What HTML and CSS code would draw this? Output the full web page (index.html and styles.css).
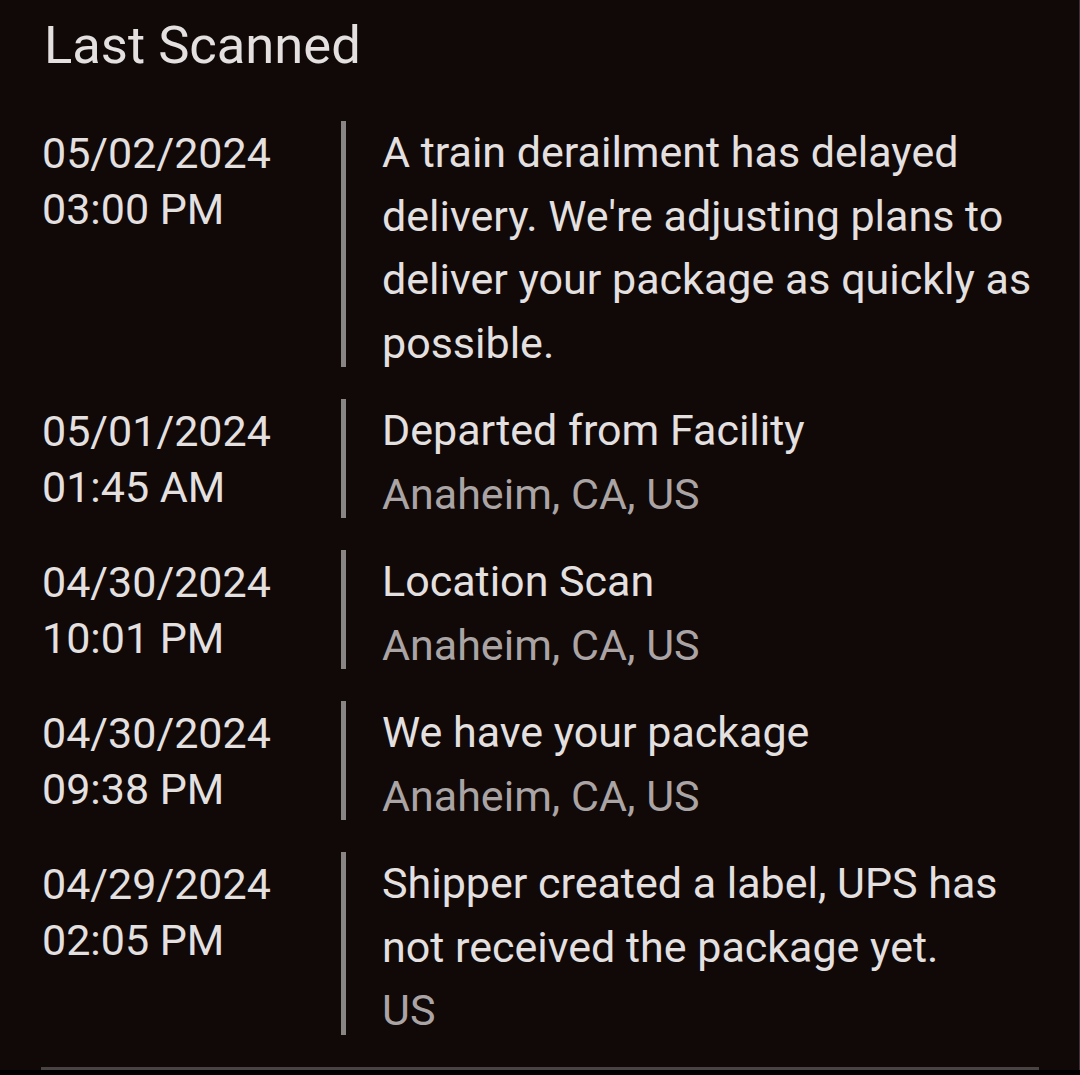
FILE: index.html
```html
<!DOCTYPE html>
<html lang="en">
<head>
<meta charset="utf-8">
<title>Last Scanned</title>
<link rel="stylesheet" href="styles.css">
</head>
<body>
<div class="card">
  <h1 class="title">Last Scanned</h1>
  <div class="list">
    <div class="row">
      <div class="when">05/02/2024<br>03:00 PM</div>
      <div class="bar"></div>
      <div class="what">
        <div class="desc">A train derailment has delayed delivery. We're adjusting plans to deliver your package as quickly as possible.</div>
      </div>
    </div>
    <div class="row">
      <div class="when">05/01/2024<br>01:45 AM</div>
      <div class="bar"></div>
      <div class="what">
        <div class="desc">Departed from Facility</div>
        <div class="loc">Anaheim, CA, US</div>
      </div>
    </div>
    <div class="row">
      <div class="when">04/30/2024<br>10:01 PM</div>
      <div class="bar"></div>
      <div class="what">
        <div class="desc">Location Scan</div>
        <div class="loc">Anaheim, CA, US</div>
      </div>
    </div>
    <div class="row">
      <div class="when">04/30/2024<br>09:38 PM</div>
      <div class="bar"></div>
      <div class="what">
        <div class="desc">We have your package</div>
        <div class="loc">Anaheim, CA, US</div>
      </div>
    </div>
    <div class="row">
      <div class="when">04/29/2024<br>02:05 PM</div>
      <div class="bar"></div>
      <div class="what">
        <div class="desc">Shipper created a label, UPS has not received the package yet.</div>
        <div class="loc">US</div>
      </div>
    </div>
  </div>
  <div class="divider"></div>
</div>
</body>
</html>
```
FILE: styles.css
```css
html, body {
  margin: 0;
  padding: 0;
  background: #000;
}
body {
  font-family: Roboto, "Noto Sans", sans-serif;
  width: 1080px;
  height: 1075px;
  overflow: hidden;
}
.card {
  background: #110808;
  height: 1070px;
  box-sizing: border-box;
  padding: 15px 40px 0 42px;
  border-right: 1px solid #3a3535;
}
.title {
  margin: 0 0 0 2px;
  font-size: 52.5px;
  font-weight: 400;
  line-height: 61px;
  color: #e4e0e0;
}
.list {
  margin-top: 45px;
  display: flex;
  flex-direction: column;
  gap: 24px;
}
.row {
  display: flex;
  align-items: stretch;
}
.when {
  width: 299px;
  flex: none;
  font-size: 43px;
  line-height: 56px;
  padding-top: 3.5px;
  color: #e4e0e0;
}
.bar {
  width: 5px;
  flex: none;
  background: #8a8585;
  margin-bottom: 8px;
}
.what {
  flex: 1;
  padding-left: 36px;
  font-size: 43px;
  line-height: 63.5px;
}
.desc {
  color: #e4e0e0;
}
.loc {
  color: #aaa4a4;
}
.divider {
  margin-top: 24px;
  margin-left: -1px;
  height: 3px;
  background: #4a4343;
}
```
